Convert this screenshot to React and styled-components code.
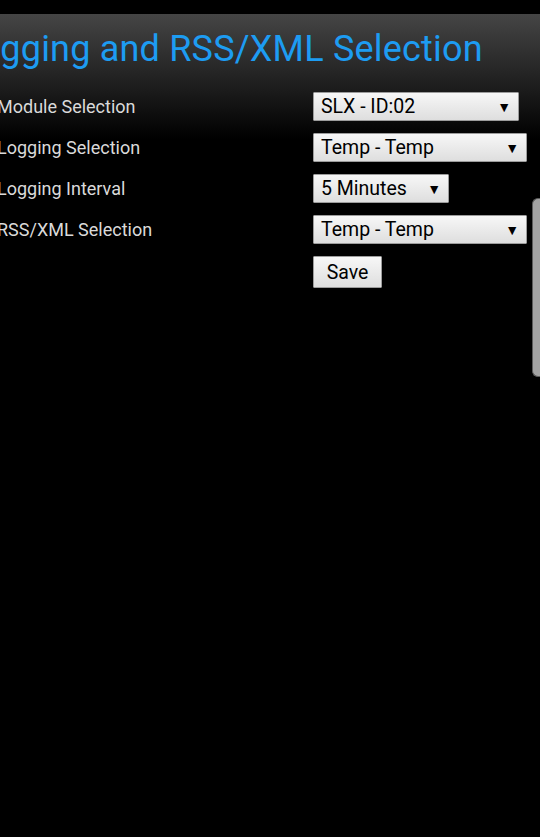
import styled, { createGlobalStyle } from 'styled-components'

const Global = createGlobalStyle`
  html, body {
    margin: 0;
    padding: 0;
    background: #000;
    overflow: hidden;
  }
  body {
    font-family: Roboto, "Noto Sans", sans-serif;
    width: 540px;
    height: 837px;
  }
`;

const Pagina = styled.div`
  position: relative;
  width: 540px;
  height: 837px;
  padding-top: 14px;
  box-sizing: border-box;
  background: #000;
  overflow: hidden;
`;

const Painel = styled.div`
  background: linear-gradient(to bottom, #454545 0px, #1c1c1c 75px, #000 125px);
  padding: 14px 0 20px;
  height: 100%;
  box-sizing: border-box;
`;

const Titulo = styled.h1`
  margin: 0 0 22px -40px;
  font-size: 36px;
  font-weight: 400;
  line-height: 42px;
  letter-spacing: 0.2px;
  color: #1d9cf2;
  white-space: nowrap;
`;

const Formulario = styled.div`
  display: grid;
  grid-template-columns: 316px auto;
  row-gap: 12px;
  margin-left: -3px;
  align-items: center;
`;

const Rotulo = styled.div`
  font-size: 18px;
  color: #dadada;
  white-space: nowrap;
`;

const Campo = styled.div`
  position: relative;
  width: ${({ largura }) => largura}px;
  height: 29px;
`;

const Selecao = styled.select`
  appearance: none;
  -webkit-appearance: none;
  width: 100%;
  height: 100%;
  margin: 0;
  padding: 0 24px 0 7px;
  box-sizing: border-box;
  font-family: Roboto, sans-serif;
  font-size: 19.5px;
  color: #000;
  background: linear-gradient(to bottom, #f7f7f7, #dedede);
  border: 1px solid #9c9c9c;
  border-radius: 1px;
  outline: none;
`;

const Seta = styled.span`
  position: absolute;
  right: 8px;
  top: 50%;
  transform: translateY(-50%);
  font-size: 14px;
  line-height: 14px;
  color: #000;
  pointer-events: none;
`;

const Botao = styled.button`
  grid-column: 2;
  width: 69px;
  height: 32px;
  padding: 0;
  font-family: Roboto, sans-serif;
  font-size: 19.5px;
  color: #000;
  background: linear-gradient(to bottom, #f7f7f7, #dedede);
  border: 1px solid #9c9c9c;
  border-radius: 1px;
`;

const BarraRolagem = styled.div`
  position: absolute;
  right: 0;
  top: 198px;
  width: 7px;
  height: 177px;
  background: #a2a2a2;
  border: 1px solid #5a5a5a;
  border-right: none;
  border-radius: 6px 0 0 6px;
`;

const campos = [
  { rotulo: 'Module Selection', valor: 'SLX - ID:02', largura: 206 },
  { rotulo: 'Logging Selection', valor: 'Temp - Temp', largura: 214 },
  { rotulo: 'Logging Interval', valor: '5 Minutes', largura: 136 },
  { rotulo: 'RSS/XML Selection', valor: 'Temp - Temp', largura: 214 },
];

function App() {
  return (
    <Pagina>
      <Global />
      <Painel>
        <Titulo>Logging and RSS/XML Selection</Titulo>
        <Formulario>
          {campos.map((c) => [
            <Rotulo key={c.rotulo + '-r'}>{c.rotulo}</Rotulo>,
            <Campo key={c.rotulo + '-c'} largura={c.largura}>
              <Selecao defaultValue={c.valor}>
                <option>{c.valor}</option>
              </Selecao>
              <Seta>▼</Seta>
            </Campo>,
          ])}
          <Botao>Save</Botao>
        </Formulario>
      </Painel>
      <BarraRolagem />
    </Pagina>
  )
}

export default App;
